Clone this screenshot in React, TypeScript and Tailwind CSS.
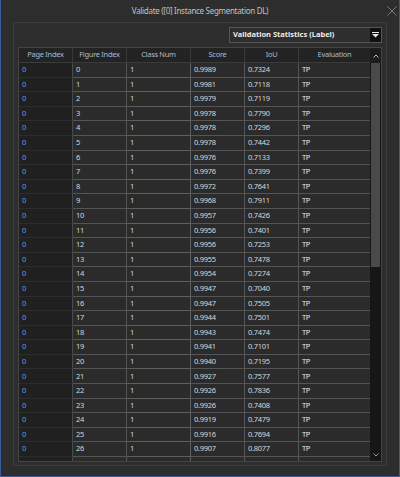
import React from "react";

const rows: [string, string][] = [
  ["0.9989", "0.7324"],
  ["0.9981", "0.7118"],
  ["0.9979", "0.7119"],
  ["0.9978", "0.7790"],
  ["0.9978", "0.7296"],
  ["0.9978", "0.7442"],
  ["0.9976", "0.7133"],
  ["0.9976", "0.7399"],
  ["0.9972", "0.7641"],
  ["0.9968", "0.7911"],
  ["0.9957", "0.7426"],
  ["0.9956", "0.7401"],
  ["0.9956", "0.7253"],
  ["0.9955", "0.7478"],
  ["0.9954", "0.7274"],
  ["0.9947", "0.7040"],
  ["0.9947", "0.7505"],
  ["0.9944", "0.7501"],
  ["0.9943", "0.7474"],
  ["0.9941", "0.7101"],
  ["0.9940", "0.7195"],
  ["0.9927", "0.7577"],
  ["0.9926", "0.7836"],
  ["0.9926", "0.7408"],
  ["0.9919", "0.7479"],
  ["0.9916", "0.7694"],
  ["0.9907", "0.8077"],
];

export default function App() {
  return (
    <div className="w-[400px] h-[477px] bg-[#2d2d2d] border-x border-b border-[#3a5c96] flex flex-col font-['Noto_Sans',sans-serif] text-[7.5px] leading-none select-none">
      {/* Title bar */}
      <div className="h-[22px] relative flex items-center justify-center text-[#c2c2c2] text-[8px] tracking-[-0.3px]">
        Validate ([0] Instance Segmentation DL)
        <svg className="absolute right-[2px] top-[6px]" width="10" height="10" viewBox="0 0 10 10">
          <path d="M0.5 0.5 L9.5 9.5 M9.5 0.5 L0.5 9.5" stroke="#7c7c7c" strokeWidth="1" />
        </svg>
      </div>

      {/* Outer group */}
      <div className="mx-[12px] h-[444px] border border-[#3e3e3e] px-[4px] pt-[4px] pb-[3px] flex flex-col">
        {/* Dropdown */}
        <div className="flex justify-end">
          <div className="w-[153px] h-[16px] bg-[#2e2e2e] border border-[#575757] flex items-center">
            <span className="flex-1 pl-[3px] text-[#ececec] font-bold">Validation Statistics (Label)</span>
            <div className="w-[11px] h-full bg-[#111111] flex items-center justify-center">
              <svg width="7" height="6" viewBox="0 0 7 6">
                <rect x="0" y="0" width="7" height="1" fill="#e8e8e8" />
                <path d="M0 2 L7 2 L3.5 5.5 Z" fill="#e8e8e8" />
              </svg>
            </div>
          </div>
        </div>

        {/* Inner box with grid */}
        <div className="mt-[4px] flex-1 border border-[#444444] flex overflow-hidden tracking-[-0.3px]">
          <div className="flex-1 flex flex-col overflow-hidden">
            {/* Header */}
            <div className="h-[15px] shrink-0 flex bg-[#232323] text-[#a6bcd2] border-b border-[#3a3a3a]">
              <div className="w-[54px] flex items-center justify-center border-r border-[#3a3a3a]">Page Index</div>
              <div className="w-[54px] flex items-center justify-center border-r border-[#3a3a3a]">Figure Index</div>
              <div className="w-[64px] flex items-center justify-center border-r border-[#3a3a3a]">Class Num</div>
              <div className="w-[54px] flex items-center justify-center border-r border-[#3a3a3a]">Score</div>
              <div className="w-[54px] flex items-center justify-center border-r border-[#3a3a3a]">IoU</div>
              <div className="flex-1 flex items-center justify-center">Evaluation</div>
            </div>
            {/* Rows */}
            {rows.map(([score, iou], i) => (
              <div key={i} className="h-[14.6px] shrink-0 flex text-[#d6d6d6]">
                <div className="w-[54px] bg-[#202020] border-b border-[#2c2c2c] border-r border-r-[#4a4a4a] flex items-center pl-[3px] text-[#5b9fe0]">0</div>
                <div className="w-[54px] bg-[#2b2b2b] border-b border-r border-[#555555] flex items-center pl-[3px]">{i}</div>
                <div className="w-[64px] bg-[#2b2b2b] border-b border-r border-[#5e5e5e] flex items-center pl-[3px]">1</div>
                <div className="w-[54px] bg-[#2b2b2b] border-b border-r border-[#555555] flex items-center pl-[3px]">{score}</div>
                <div className="w-[54px] bg-[#2b2b2b] border-b border-r border-[#555555] flex items-center pl-[3px]">{iou}</div>
                <div className="flex-1 bg-[#2b2b2b] border-b border-[#555555] flex items-center pl-[3px] text-[#e4e8ee]">TP</div>
              </div>
            ))}
            {/* partially visible next row */}
            <div className="h-[14.6px] shrink-0 flex">
              <div className="w-[54px] bg-[#202020] border-r border-[#4a4a4a]" />
              <div className="w-[54px] bg-[#2b2b2b] border-r border-[#555555]" />
              <div className="w-[64px] bg-[#2b2b2b] border-r border-[#5e5e5e]" />
              <div className="w-[54px] bg-[#2b2b2b] border-r border-[#555555]" />
              <div className="w-[54px] bg-[#2b2b2b] border-r border-[#555555]" />
              <div className="flex-1 bg-[#2b2b2b]" />
            </div>
          </div>

          {/* Scrollbar */}
          <div className="w-[11px] shrink-0 bg-[#161616] flex flex-col">
            <div className="h-[15px] bg-[#1c1c1c] flex items-center justify-center">
              <svg width="6" height="4" viewBox="0 0 6 4">
                <path d="M0.5 3.5 L3 1 L5.5 3.5" stroke="#bdbdbd" strokeWidth="1" fill="none" />
              </svg>
            </div>
            <div className="h-[204px] bg-[#4a4a4a] mx-[1px]" />
            <div className="flex-1" />
            <div className="h-[12px] flex items-center justify-center">
              <svg width="6" height="4" viewBox="0 0 6 4">
                <path d="M0.5 0.5 L3 3 L5.5 0.5" stroke="#9a9a9a" strokeWidth="1" fill="none" />
              </svg>
            </div>
          </div>
        </div>
      </div>
    </div>
  );
}
